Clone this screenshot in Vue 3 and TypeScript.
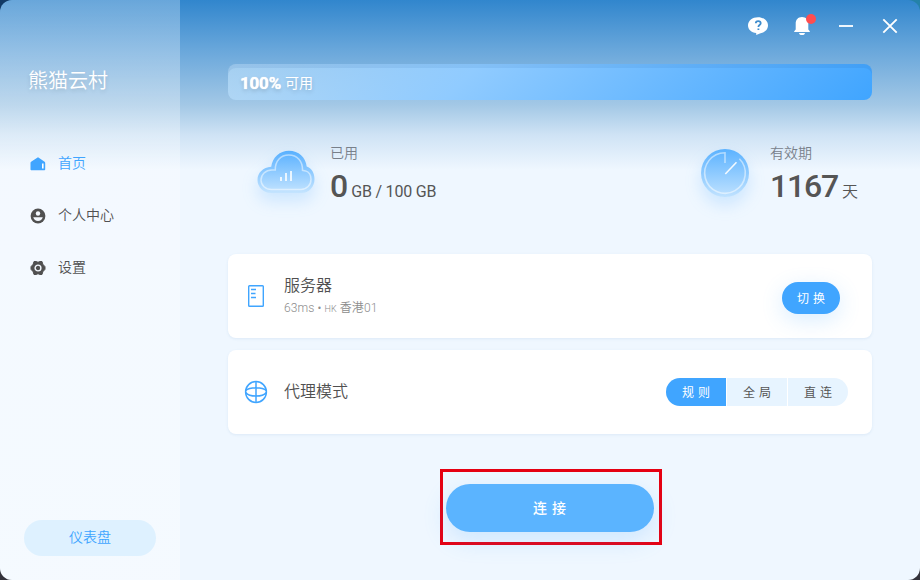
<script setup lang="ts">
import { ref } from 'vue'

type Mode = 'rule' | 'global' | 'direct'
const mode = ref<Mode>('rule')
const modes: { id: Mode; label: string }[] = [
  { id: 'rule', label: '规则' },
  { id: 'global', label: '全局' },
  { id: 'direct', label: '直连' },
]
const page = ref('home')
</script>

<template>
  <div class="desktop">
    <div class="window">
      <aside class="sidebar">
        <h1 class="brand">熊猫云村</h1>
        <nav class="nav">
          <a class="nav-item" :class="{ active: page === 'home' }" @click="page = 'home'">
            <svg width="16" height="16" viewBox="0 0 16 16"><path d="M7.2 1.700a1.200 1.200 0 0 1 1.600 0l5.800 4.100c.4.3.6.7.6 1.200v6.200c0 .6-.4 1-1 1H1.500c-.6 0-1-.4-1-1V7c0-.5.2-.9.6-1.200z" fill="currentColor" /><path d="M12 7.600h1.600v4.900H12z" fill="#fff" /></svg>
            <span>首页</span>
          </a>
          <a class="nav-item" :class="{ active: page === 'user' }" @click="page = 'user'">
            <svg width="16" height="16" viewBox="0 0 16 16"><circle cx="8" cy="8" r="7.400" fill="currentColor" /><circle cx="8" cy="5.500" r="2.200" fill="#f4f9ff" /><path d="M3.200 9.300h9.600a5 5 0 0 1-9.600 0z" fill="#f4f9ff" /></svg>
            <span>个人中心</span>
          </a>
          <a class="nav-item" :class="{ active: page === 'settings' }" @click="page = 'settings'">
            <svg width="16" height="16" viewBox="0 0 16 16"><path d="M4 1.500h2.200L8 2.300l1.800-.8H12l.8 2.700L15 6.700v2.600l-2.200 2.500-.8 2.700H9.800L8 13.700l-1.800.8H4l-.8-2.700L1 9.300V6.700l2.200-2.500z" fill="currentColor" stroke="currentColor" stroke-width="1" stroke-linejoin="round" /><circle cx="8" cy="8" r="2.900" fill="none" stroke="#f4f9ff" stroke-width="1.400" /></svg>
            <span>设置</span>
          </a>
        </nav>
        <button class="dashboard">仪表盘</button>
      </aside>

      <main class="main">
        <header class="titlebar">
          <svg class="tool" width="24" height="24" viewBox="0 0 24 24"><path d="M12 3.200c5.600 0 10 3.500 10 8.100s-3.700 7.400-7.400 7.900L10.200 21v-1.900c-4.900-.5-8.200-3.700-8.200-7.800 0-4.600 4.400-8.100 10-8.100z" fill="#fff" /><path d="M9.800 9.300c0-1.300 1-2.200 2.400-2.200s2.500.8 2.500 2.100c0 1.900-2.300 1.800-2.300 3.700M12.400 14.400v1.700" fill="none" stroke="#3f8dcd" stroke-width="1.800" /></svg>
          <div class="bell">
            <svg width="24" height="24" viewBox="0 0 24 24"><path d="M12 3.100c4 0 6.300 2.900 6.300 6.500v5.800l1.500 1.800v.7H4.200v-.7l1.500-1.800V9.600c0-3.600 2.300-6.500 6.300-6.500zM9 18.900h6c-.3 1.500-1.500 2.200-3 2.200s-2.700-.7-3-2.200z" fill="#fff" /></svg>
            <i class="dot"></i>
          </div>
          <svg class="tool" width="24" height="24" viewBox="0 0 24 24"><path d="M5 12h14" stroke="#eef6fd" stroke-width="2" /></svg>
          <svg class="tool" width="24" height="24" viewBox="0 0 24 24"><path d="M5.300 5.300l13.400 13.400M18.700 5.300L5.300 18.700" stroke="#fff" stroke-width="1.900" /></svg>
        </header>

        <div class="progress"><b>100%</b><span>可用</span></div>

        <section class="stats">
          <div class="stat">
            <svg class="glow cloud" width="58" height="44" viewBox="0 0 58 44">
              <defs><linearGradient id="cloudFill" x1="0" y1="0" x2="0" y2="1"><stop offset="0" stop-color="#58b0ff" /><stop offset="1" stop-color="#c4e4ff" /></linearGradient></defs>
              <path d="M14.500 43C6.500 43 .5 37.200.5 30s5.500-12.500 13.700-13.200C15.500 7.500 22.800.8 32 .8c9.600 0 16.800 6.500 17.700 15.800C54.500 18.300 57.500 23 57.500 29c0 8-5.500 14-13.500 14z" fill="url(#cloudFill)" />
              <path d="M14.500 39.500C8.500 39.500 4 35.200 4 30s4.500-10 11-10h3.300C18 11.200 23.500 5 31.800 5c8.400 0 14 6.200 13.700 15.300l3 .6c3.500 1.200 5.500 4.300 5.500 8.300 0 6-4.300 10.300-10 10.300z" fill="none" stroke="#fff" stroke-opacity=".5" stroke-width="1.500" />
              <path d="M24 27v4M29 23v8M34 21v10" stroke="#fff" stroke-opacity=".8" stroke-width="2" />
            </svg>
            <div class="info"><div class="label">已用</div><div class="value"><b>0</b><span>GB / 100 GB</span></div></div>
          </div>
          <div class="stat expire">
            <svg class="glow clock" width="48" height="48" viewBox="0 0 48 48">
              <defs><linearGradient id="clockFill" x1="0" y1="0" x2="0" y2="1"><stop offset="0" stop-color="#5bb2ff" /><stop offset="1" stop-color="#c0e2ff" /></linearGradient></defs>
              <circle cx="24" cy="24" r="24" fill="url(#clockFill)" />
              <path d="M24 14V3.700A20.300 20.300 0 1 0 38.400 9.700" fill="none" stroke="#fff" stroke-opacity=".5" stroke-width="1.600" />
              <path d="M24.300 25L35.500 13.300" stroke="#fff" stroke-opacity=".9" stroke-width="1.600" />
            </svg>
            <div class="info"><div class="label">有效期</div><div class="value"><b>1167</b><span>天</span></div></div>
          </div>
        </section>

        <section class="cards">
          <div class="card">
            <svg class="card-icon" width="24" height="24" viewBox="0 0 24 24" fill="none" stroke="#40a5ff"><rect x="4.700" y="1.700" width="14.600" height="20.600" rx=".8" stroke-width="1.400" /><path d="M7 5.500h5M7 9.500h4.500M7 13.500h5" stroke-width="1.700" /></svg>
            <div class="card-text"><div class="title">服务器</div><div class="sub">63ms • <small>HK</small> 香港01</div></div>
            <button class="switch">切换</button>
          </div>
          <div class="card">
            <svg class="card-icon" width="24" height="24" viewBox="0 0 24 24" fill="none" stroke="#40a5ff" stroke-width="1.500"><circle cx="12" cy="12" r="10.400" /><path d="M12 1.500v21M1.700 10.500C3.500 8.700 7.300 7.700 12 7.700s8.500 1 10.300 2.800M1.700 12.500c1.800 2.300 5.600 3.600 10.300 3.600s8.500-1.300 10.300-3.600" /></svg>
            <div class="card-text"><div class="title">代理模式</div></div>
            <div class="segments">
              <button v-for="m in modes" :key="m.id" :class="{ on: mode === m.id }" @click="mode = m.id">{{ m.label }}</button>
            </div>
          </div>
        </section>

        <div class="action"><button class="connect">连接</button></div>
      </main>
    </div>
  </div>
</template>

<style>
body { margin: 0; }
</style>

<style scoped>
* { box-sizing: border-box; }
button { border: 0; padding: 0; font-family: inherit; }
.desktop {
  width: 920px;
  height: 580px;
  overflow: hidden;
  background:
    linear-gradient(180deg, transparent 50%, #33323a 50%),
    linear-gradient(90deg, #123a66, #2482a9);
}
.window {
  display: flex;
  width: 100%;
  height: 100%;
  border-radius: 12px;
  overflow: hidden;
  color: #505050;
  font-family: Roboto, "Noto Sans CJK SC", sans-serif;
  font-weight: 350;
  background: linear-gradient(180deg, #3186cd 0, #69a7db 50px, #a3c8e6 105px, #cfe3f5 135px, #eff7ff 170px);
}
.sidebar {
  display: flex;
  flex-direction: column;
  width: 180px;
  padding: 67px 24px 24px;
  background: linear-gradient(rgba(255, 255, 255, 0.27), rgba(255, 255, 255, 0.36));
}
.brand {
  margin: 0 0 53px 4px;
  font-size: 20px;
  line-height: 28px;
  font-weight: 350;
  color: #fff;
  text-shadow: 0 2px 4px rgba(0, 0, 0, 0.12);
}
.nav { display: flex; flex-direction: column; gap: 24px; padding-left: 6px; }
.nav-item { display: flex; align-items: center; gap: 12px; height: 28px; font-size: 14px; cursor: pointer; }
.nav-item svg { margin-top: 4px; }
.nav-item.active { color: #40a5ff; }
.dashboard {
  height: 36px;
  margin-top: auto;
  padding-bottom: 4px;
  border-radius: 18px;
  font-size: 14px;
  font-weight: 350;
  color: #40a5ff;
  background: #def1ff;
}
.main { display: flex; flex-direction: column; flex: 1; padding: 0 48px; }
.titlebar { display: flex; justify-content: flex-end; align-items: center; gap: 20px; height: 52px; margin-right: -30px; }
.titlebar svg { display: block; }
.bell { position: relative; }
.dot { position: absolute; top: 0; right: -2px; width: 10px; height: 10px; border-radius: 50%; background: #ff4d4f; }
.progress {
  display: flex;
  align-items: center;
  gap: 4px;
  height: 36px;
  margin-top: 12px;
  padding: 2px 12px 0;
  border-radius: 8px;
  font-size: 14px;
  color: #fff;
  text-shadow: 0 2px 4px rgba(0, 0, 0, 0.18);
  background: linear-gradient(135deg, rgba(200, 232, 255, 0.55), #90cbff 37%, #40a5ff);
  box-shadow: inset 0 4px 0 rgba(0, 70, 140, 0.08);
}
.progress b {
  font-size: 17px;
  font-weight: 700;
  letter-spacing: -0.2px;
  text-shadow: 0 0 1px #fff, 0 2px 4px rgba(0, 0, 0, 0.18);
}
.progress span { padding-bottom: 2px; font-weight: 400; }
.stats { display: flex; justify-content: space-between; height: 64px; margin-top: 43px; padding: 0 14px 0 29px; }
.stat { display: flex; gap: 15px; }
.glow { filter: drop-shadow(0 8px 8px rgba(64, 165, 255, 0.2)); }
.cloud { margin-top: 7px; }
.clock { margin-top: 6px; }
.expire { gap: 21px; }
.label { font-size: 14px; line-height: 20px; color: #78808a; }
.value { display: flex; align-items: baseline; gap: 4px; line-height: 42px; margin-top: 2px; color: #555; }
.value b { font-size: 32px; font-weight: 500; letter-spacing: -1px; }
.value span { font-size: 16px; font-weight: 400; letter-spacing: -0.2px; }
.expire .value b { letter-spacing: -1.2px; }
.expire .value span { font-weight: 350; letter-spacing: 0; }
.cards { display: flex; flex-direction: column; gap: 12px; margin-top: 47px; }
.card {
  display: flex;
  align-items: center;
  height: 84px;
  padding: 0 24px 0 16px;
  border-radius: 8px;
  background: #fff;
  box-shadow: 0 1px 3px rgba(60, 120, 180, 0.1);
}
.card-text { flex: 1; margin-left: 16px; }
.title { font-size: 16px; line-height: 24px; }
.sub { font-size: 12px; line-height: 20px; font-weight: 350; color: #8c8c8c; letter-spacing: 0.1px; }
.sub small { font-size: 9px; }
.switch {
  width: 58px;
  height: 32px;
  margin: 4px 8px 0 0;
  border-radius: 16px;
  font-size: 12px;
  letter-spacing: 4px;
  padding: 0 0 1px 4px;
  color: #fff;
  background: #40a5ff;
  box-shadow: 0 6px 22px rgba(64, 165, 255, 0.2);
}
.segments { display: flex; gap: 1px; overflow: hidden; border-radius: 14px; }
.segments button {
  width: 60px;
  height: 28px;
  padding: 0 0 1px 4px;
  font-size: 12px;
  letter-spacing: 4px;
  color: #555;
  background: #e7f4ff;
}
.segments .on { color: #fff; background: #40a5ff; }
.action {
  align-self: center;
  margin: 35px 0 0 2px;
  padding: 12px 5px 10px 3px;
  border: 3px solid #e60012;
}
.connect {
  display: block;
  width: 208px;
  height: 48px;
  border-radius: 24px;
  padding: 0 0 2px 4px;
  font-size: 14px;
  font-weight: 500;
  letter-spacing: 5px;
  color: #fff;
  background: #5bb4ff;
  box-shadow: 0 8px 24px rgba(64, 165, 255, 0.2);
}
</style>
